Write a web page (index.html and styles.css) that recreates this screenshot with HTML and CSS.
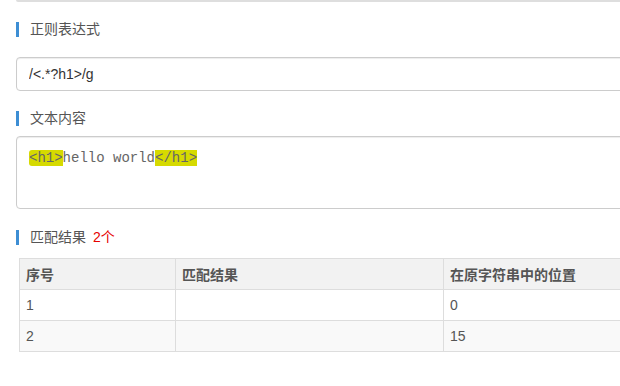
FILE: index.html
```html
<!DOCTYPE html>
<html lang="zh-CN">
<head>
  <meta charset="UTF-8">
  <title>正则表达式测试</title>
  <link rel="stylesheet" href="styles.css">
</head>
<body>
  <div class="page">
    <div class="prev-box"></div>

    <h3 class="section-title title-regex">正则表达式</h3>
    <input class="form-control" type="text" value="/<.*?h1>/g">

    <h3 class="section-title title-text">文本内容</h3>
    <div class="text-box"><mark class="hl first">&lt;h1&gt;</mark>hello world<mark class="hl">&lt;/h1&gt;</mark></div>

    <h3 class="section-title title-result">匹配结果 <span class="count">2个</span></h3>
    <table class="result-table">
      <thead>
        <tr>
          <th class="col-index">序号</th>
          <th class="col-match">匹配结果</th>
          <th>在原字符串中的位置</th>
        </tr>
      </thead>
      <tbody>
        <tr>
          <td>1</td>
          <td></td>
          <td>0</td>
        </tr>
        <tr class="striped">
          <td>2</td>
          <td></td>
          <td>15</td>
        </tr>
      </tbody>
    </table>
  </div>
</body>
</html>
```

FILE: styles.css
```css
* {
  margin: 0;
  padding: 0;
  box-sizing: border-box;
}

body {
  font-family: 'Liberation Sans', 'Noto Sans CJK SC', sans-serif;
  font-size: 14px;
  color: #555;
  background: #fff;
  overflow: hidden;
}

.page {
  width: 760px;
  padding-left: 16px;
}

/* bottom of the box above, cut off by the screenshot */
.prev-box {
  height: 2px;
  background: #dedede;
  border-radius: 0 0 0 4px;
}

.section-title {
  font-size: 14px;
  font-weight: normal;
  line-height: 15px;
  height: 15px;
  color: #555;
  border-left: 3px solid #3d8ed4;
  padding-left: 11px;
}

.title-regex {
  margin-top: 20px;
}

.title-text {
  margin-top: 20px;
}

.title-result {
  margin-top: 21px;
}

.count {
  color: #e60000;
  margin-left: 3px;
}

.form-control {
  display: block;
  width: 100%;
  height: 34px;
  margin-top: 20px;
  padding: 0 12px;
  font-family: 'Liberation Sans', sans-serif;
  font-size: 14px;
  color: #333;
  border: 1px solid #ccc;
  border-radius: 4px;
  box-shadow: inset 0 1px 1px rgba(0, 0, 0, 0.075);
  outline: none;
}

.text-box {
  height: 73px;
  margin-top: 10px;
  padding: 13px 12px 12px;
  font-family: 'Liberation Mono', monospace;
  font-size: 14px;
  line-height: 16px;
  color: #666;
  border: 1px solid #ccc;
  border-radius: 4px;
  box-shadow: inset 0 1px 1px rgba(0, 0, 0, 0.075);
  white-space: pre;
}

.hl {
  background: #d6da00;
  color: #666;
}

.hl.first {
  border-radius: 3px 0 0 3px;
}

.result-table {
  margin-top: 13px;
  margin-left: 3px;
  width: 700px;
  border-collapse: collapse;
  table-layout: fixed;
}

.result-table th,
.result-table td {
  height: 31px;
  padding: 0 6px;
  text-align: left;
  border: 1px solid #ddd;
  color: #555;
  font-size: 14px;
}

.result-table th {
  background: #f2f2f2;
  font-weight: bold;
}

.col-index {
  width: 156px;
}

.col-match {
  width: 268px;
}

.striped td {
  background: #f9f9f9;
}
```
